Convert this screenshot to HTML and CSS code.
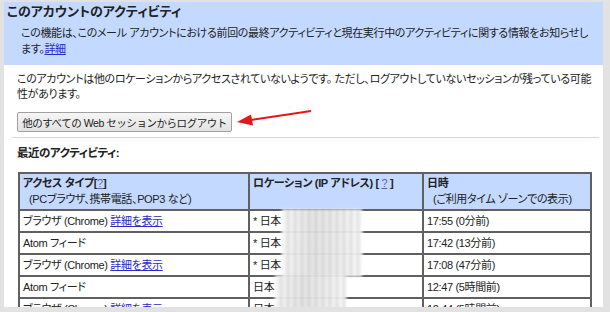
FILE: index.html
```html
<!DOCTYPE html>
<html lang="ja">
<head>
    <meta charset="UTF-8" />
    <title>このアカウントのアクティビティ</title>
    <link rel="stylesheet" href="styles.css">
</head>
<body>
    <div class="window">
        <div class="intro">
            <h1>このアカウントのアクティビティ</h1>
            <p>この機能は、このメール アカウントにおける前回の最終アクティビティと現在実行中のアクティビティに関する情報をお知らせします。<a href="#" class="link">詳細</a></p>
        </div>

        <div class="content">
            <p class="note">このアカウントは他のロケーションからアクセスされていないようです。 ただし、ログアウトしていないセッションが残っている可能性があります。</p>
            <button class="logout">他のすべての Web セッションからログアウト</button>
            <hr class="divider">
            <h2>最近のアクティビティ:</h2>

            <table class="activity">
                <thead>
                    <tr>
                        <th class="col-type">アクセス タイプ[<a href="#" class="help">?</a>]<span class="sub">(PCブラウザ、携帯電話、POP3 など)</span></th>
                        <th class="col-loc">ロケーション (IP アドレス) [ <a href="#" class="help">?</a> ]</th>
                        <th class="col-time">日時<span class="sub">(ご利用タイム ゾーンでの表示)</span></th>
                    </tr>
                </thead>
                <tbody>
                    <tr>
                        <td>ブラウザ (Chrome) <a href="#" class="link">詳細を表示</a></td>
                        <td>* 日本<span class="ip"></span></td>
                        <td>17:55 (0分前)</td>
                    </tr>
                    <tr>
                        <td>Atom フィード</td>
                        <td>* 日本<span class="ip"></span></td>
                        <td>17:42 (13分前)</td>
                    </tr>
                    <tr>
                        <td>ブラウザ (Chrome) <a href="#" class="link">詳細を表示</a></td>
                        <td>* 日本<span class="ip"></span></td>
                        <td>17:08 (47分前)</td>
                    </tr>
                    <tr>
                        <td>Atom フィード</td>
                        <td>日本<span class="ip short"></span></td>
                        <td>12:47 (5時間前)</td>
                    </tr>
                    <tr>
                        <td>ブラウザ (Chrome) <a href="#" class="link">詳細を表示</a></td>
                        <td>日本<span class="ip short"></span></td>
                        <td>12:44 (5時間前)</td>
                    </tr>
                </tbody>
            </table>
        </div>

        <!-- red annotation arrow pointing at the button -->
        <svg class="arrow" width="80" height="24" viewBox="0 0 80 24">
            <line x1="17" y1="15" x2="77" y2="6" stroke="#e8141a" stroke-width="2" />
            <polygon points="3,17 19,20.5 17,9.5" fill="#e8141a" />
        </svg>
    </div>
</body>
</html>
```

FILE: styles.css
```css
body {
    margin: 0;
    background: #e2e2e2;
    font-family: "Liberation Sans", "Noto Sans CJK JP", sans-serif;
    font-size: 11px;
    letter-spacing: -0.35px;
    color: #222;
    font-feature-settings: "palt";
}
.window {
    position: relative;
    margin: 2px 7px 0 4px;
    height: 305px;
    overflow: hidden;
    background: #fff;
}
.intro { background: #c3d9ff; padding: 2px 8px 8px 3px; }
.intro h1 { margin: 0; font-size: 13px; line-height: 16px; letter-spacing: 0; }
.intro p { margin: 5px 0 0 14px; line-height: 16px; }

.link { color: #2a2acc; }
.help { color: #6a5ab8; font-weight: normal; }

.content { padding: 7px 4px 0 13px; }
.note { margin: 0; line-height: 15px; }

.logout {
    display: block;
    margin-top: 10px;
    width: 215px;
    height: 20px;
    padding: 0;
    border: 1px solid #a0a0a0;
    border-radius: 2px;
    background: linear-gradient(#f6f6f6, #e2e2e2);
    font-family: inherit;
    font-size: 10.5px;
    letter-spacing: -0.45px;
    white-space: nowrap;
    color: #222;
}

.divider { margin: 5px 0 0 -5px; border: 0; border-top: 1px solid #c3d9ff; }
h2 { margin: 7px 0 0; font-size: 11.5px; line-height: 16px; letter-spacing: -0.5px; }

.activity {
    margin: 11px 0 0 1px;
    width: 574px;
    border-collapse: collapse;
    table-layout: fixed;
}
.activity th, .activity td {
    border: 2px solid #606060;
    text-align: left;
    vertical-align: top;
    line-height: 16px;
    white-space: nowrap;
}
.activity th { background: #c3d9ff; padding: 1px 3px 2px; }
.activity td { padding: 2px 3px 2px; }
.col-type { width: 222px; }
.col-loc { width: 166px; }
.sub { display: block; padding-left: 6px; font-weight: normal; }

.ip {
    display: inline-block;
    width: 80px;
    height: 24px;
    margin: -4px 0 -4px 1px;
    vertical-align: top;
    background:
        repeating-linear-gradient(90deg, transparent 0 5px, rgba(150,150,150,0.3) 5px 7px),
        linear-gradient(90deg, #f5f5f5, #e4e4e4 40%, #ececec 70%, #f8f8f8);
    filter: blur(1.5px);
}
.ip.short { width: 71px; }

.arrow { position: absolute; left: 230px; top: 103px; }
```
